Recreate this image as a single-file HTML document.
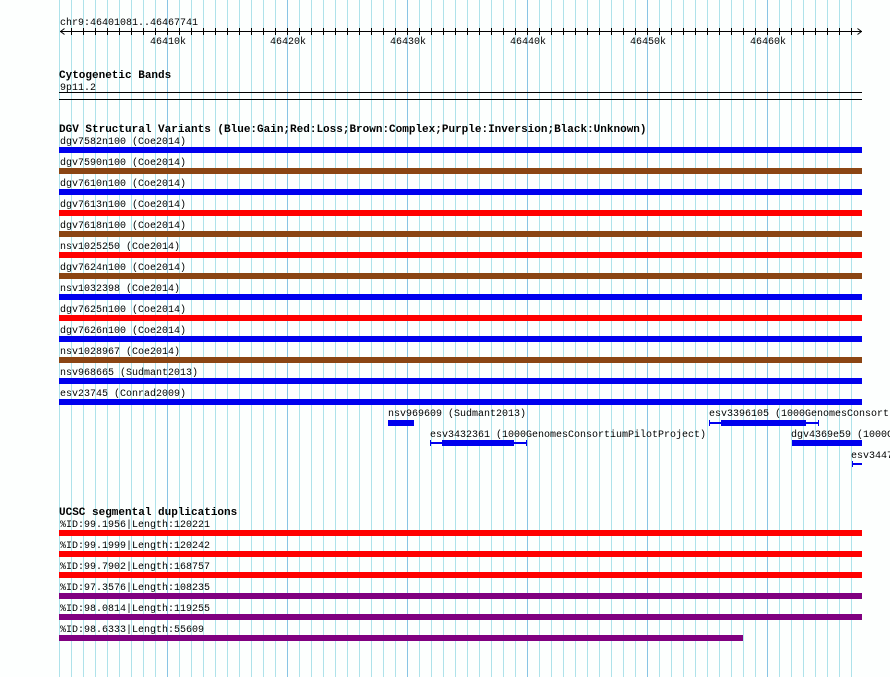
<!DOCTYPE html>
<html><head><meta charset="utf-8"><style>
html,body{margin:0;padding:0;background:#fff;}
svg{display:block}
text{font-family:"Liberation Mono",monospace;font-size:10px;fill:#000}
.b{font-weight:bold;font-size:11px}
</style></head><body>
<svg width="890" height="677" xmlns="http://www.w3.org/2000/svg" shape-rendering="crispEdges">
<rect width="890" height="677" fill="#fdfffe"/>
<path stroke="#aee2ea" stroke-width="1" d="M59.5 0V677M71.5 0V677M83.5 0V677M95.5 0V677M107.5 0V677M119.5 0V677M131.5 0V677M143.5 0V677M155.5 0V677M179.5 0V677M191.5 0V677M203.5 0V677M215.5 0V677M227.5 0V677M239.5 0V677M251.5 0V677M263.5 0V677M275.5 0V677M299.5 0V677M311.5 0V677M323.5 0V677M335.5 0V677M347.5 0V677M359.5 0V677M371.5 0V677M383.5 0V677M395.5 0V677M419.5 0V677M431.5 0V677M443.5 0V677M455.5 0V677M467.5 0V677M479.5 0V677M491.5 0V677M503.5 0V677M515.5 0V677M539.5 0V677M551.5 0V677M563.5 0V677M575.5 0V677M587.5 0V677M599.5 0V677M611.5 0V677M623.5 0V677M635.5 0V677M659.5 0V677M671.5 0V677M683.5 0V677M695.5 0V677M707.5 0V677M719.5 0V677M731.5 0V677M743.5 0V677M755.5 0V677M779.5 0V677M791.5 0V677M803.5 0V677M815.5 0V677M827.5 0V677M839.5 0V677M851.5 0V677"/>
<path stroke="#88c4e4" stroke-width="1" d="M167.5 0V677M287.5 0V677M407.5 0V677M527.5 0V677M647.5 0V677M767.5 0V677"/>
<!-- ruler -->
<text x="60" y="25">chr9:46401081..46467741</text>
<rect x="60" y="31" width="802" height="1" fill="#000"/>
<path d="M60.5 31.5 l4 -3 M60.5 31.5 l4 3 M861.5 31.5 l-4 -3 M861.5 31.5 l-4 3" stroke="#000" fill="none" shape-rendering="auto"/>
<path stroke="#000" d="M71.5 28V35M83.5 28V35M95.5 28V35M107.5 28V35M119.5 28V35M131.5 28V35M143.5 28V35M155.5 28V35M167.5 28V35M179.5 28V35M191.5 28V35M203.5 28V35M215.5 28V35M227.5 28V35M239.5 28V35M251.5 28V35M263.5 28V35M275.5 28V35M287.5 28V35M299.5 28V35M311.5 28V35M323.5 28V35M335.5 28V35M347.5 28V35M359.5 28V35M371.5 28V35M383.5 28V35M395.5 28V35M407.5 28V35M419.5 28V35M431.5 28V35M443.5 28V35M455.5 28V35M467.5 28V35M479.5 28V35M491.5 28V35M503.5 28V35M515.5 28V35M527.5 28V35M539.5 28V35M551.5 28V35M563.5 28V35M575.5 28V35M587.5 28V35M599.5 28V35M611.5 28V35M623.5 28V35M635.5 28V35M647.5 28V35M659.5 28V35M671.5 28V35M683.5 28V35M695.5 28V35M707.5 28V35M719.5 28V35M731.5 28V35M743.5 28V35M755.5 28V35M767.5 28V35M779.5 28V35M791.5 28V35M803.5 28V35M815.5 28V35M827.5 28V35M839.5 28V35M851.5 28V35"/>
<g text-anchor="middle">
<text x="168" y="44">46410k</text><text x="288" y="44">46420k</text><text x="408" y="44">46430k</text><text x="528" y="44">46440k</text><text x="648" y="44">46450k</text><text x="768" y="44">46460k</text>
</g>
<!-- cytobands -->
<text class="b" x="59" y="78">Cytogenetic Bands</text>
<text x="60" y="90">9p11.2</text>
<rect x="59" y="92" width="803" height="1" fill="#000"/>
<rect x="59" y="99" width="803" height="1" fill="#000"/>
<!-- DGV -->
<text class="b" x="59" y="132">DGV Structural Variants (Blue:Gain;Red:Loss;Brown:Complex;Purple:Inversion;Black:Unknown)</text>
<text x="60" y="144">dgv7582n100 (Coe2014)</text><rect x="59" y="147" width="803" height="6" fill="#0000ee"/>
<text x="60" y="165">dgv7590n100 (Coe2014)</text><rect x="59" y="168" width="803" height="6" fill="#8b4513"/>
<text x="60" y="186">dgv7610n100 (Coe2014)</text><rect x="59" y="189" width="803" height="6" fill="#0000ee"/>
<text x="60" y="207">dgv7613n100 (Coe2014)</text><rect x="59" y="210" width="803" height="6" fill="#ff0000"/>
<text x="60" y="228">dgv7618n100 (Coe2014)</text><rect x="59" y="231" width="803" height="6" fill="#8b4513"/>
<text x="60" y="249">nsv1025250 (Coe2014)</text><rect x="59" y="252" width="803" height="6" fill="#ff0000"/>
<text x="60" y="270">dgv7624n100 (Coe2014)</text><rect x="59" y="273" width="803" height="6" fill="#8b4513"/>
<text x="60" y="291">nsv1032398 (Coe2014)</text><rect x="59" y="294" width="803" height="6" fill="#0000ee"/>
<text x="60" y="312">dgv7625n100 (Coe2014)</text><rect x="59" y="315" width="803" height="6" fill="#ff0000"/>
<text x="60" y="333">dgv7626n100 (Coe2014)</text><rect x="59" y="336" width="803" height="6" fill="#0000ee"/>
<text x="60" y="354">nsv1028967 (Coe2014)</text><rect x="59" y="357" width="803" height="6" fill="#8b4513"/>
<text x="60" y="375">nsv968665 (Sudmant2013)</text><rect x="59" y="378" width="803" height="6" fill="#0000ee"/>
<text x="60" y="396">esv23745 (Conrad2009)</text><rect x="59" y="399" width="803" height="6" fill="#0000ee"/>
<g fill="#0000ee">
<text x="388" y="416">nsv969609 (Sudmant2013)</text>
<rect x="388" y="420" width="26" height="6"/>
<text x="709" y="416">esv3396105 (1000GenomesConsort</text>
<rect x="709" y="420" width="1" height="6"/><rect x="709" y="422" width="109" height="2"/><rect x="721" y="420" width="85" height="6"/><rect x="818" y="420" width="1" height="6"/>
<text x="430" y="437">esv3432361 (1000GenomesConsortiumPilotProject)</text>
<rect x="430" y="440" width="1" height="6"/><rect x="430" y="442" width="96" height="2"/><rect x="442" y="440" width="72" height="6"/><rect x="526" y="440" width="1" height="6"/>
<text x="791" y="437">dgv4369e59 (1000G</text>
<rect x="792" y="440" width="70" height="6"/>
<text x="851" y="458">esv3447</text>
<rect x="852" y="461" width="1" height="6"/><rect x="852" y="463" width="10" height="2"/>
</g>
<text class="b" x="59" y="515">UCSC segmental duplications</text>
<text x="60" y="527">%ID:99.1956|Length:120221</text><rect x="59" y="530" width="803" height="6" fill="#ff0000"/>
<text x="60" y="548">%ID:99.1999|Length:120242</text><rect x="59" y="551" width="803" height="6" fill="#ff0000"/>
<text x="60" y="569">%ID:99.7902|Length:168757</text><rect x="59" y="572" width="803" height="6" fill="#ff0000"/>
<text x="60" y="590">%ID:97.3576|Length:108235</text><rect x="59" y="593" width="803" height="6" fill="#800080"/>
<text x="60" y="611">%ID:98.0814|Length:119255</text><rect x="59" y="614" width="803" height="6" fill="#800080"/>
<text x="60" y="632">%ID:98.6333|Length:55609</text><rect x="59" y="635" width="684" height="6" fill="#800080"/>
</svg>
</body></html>
